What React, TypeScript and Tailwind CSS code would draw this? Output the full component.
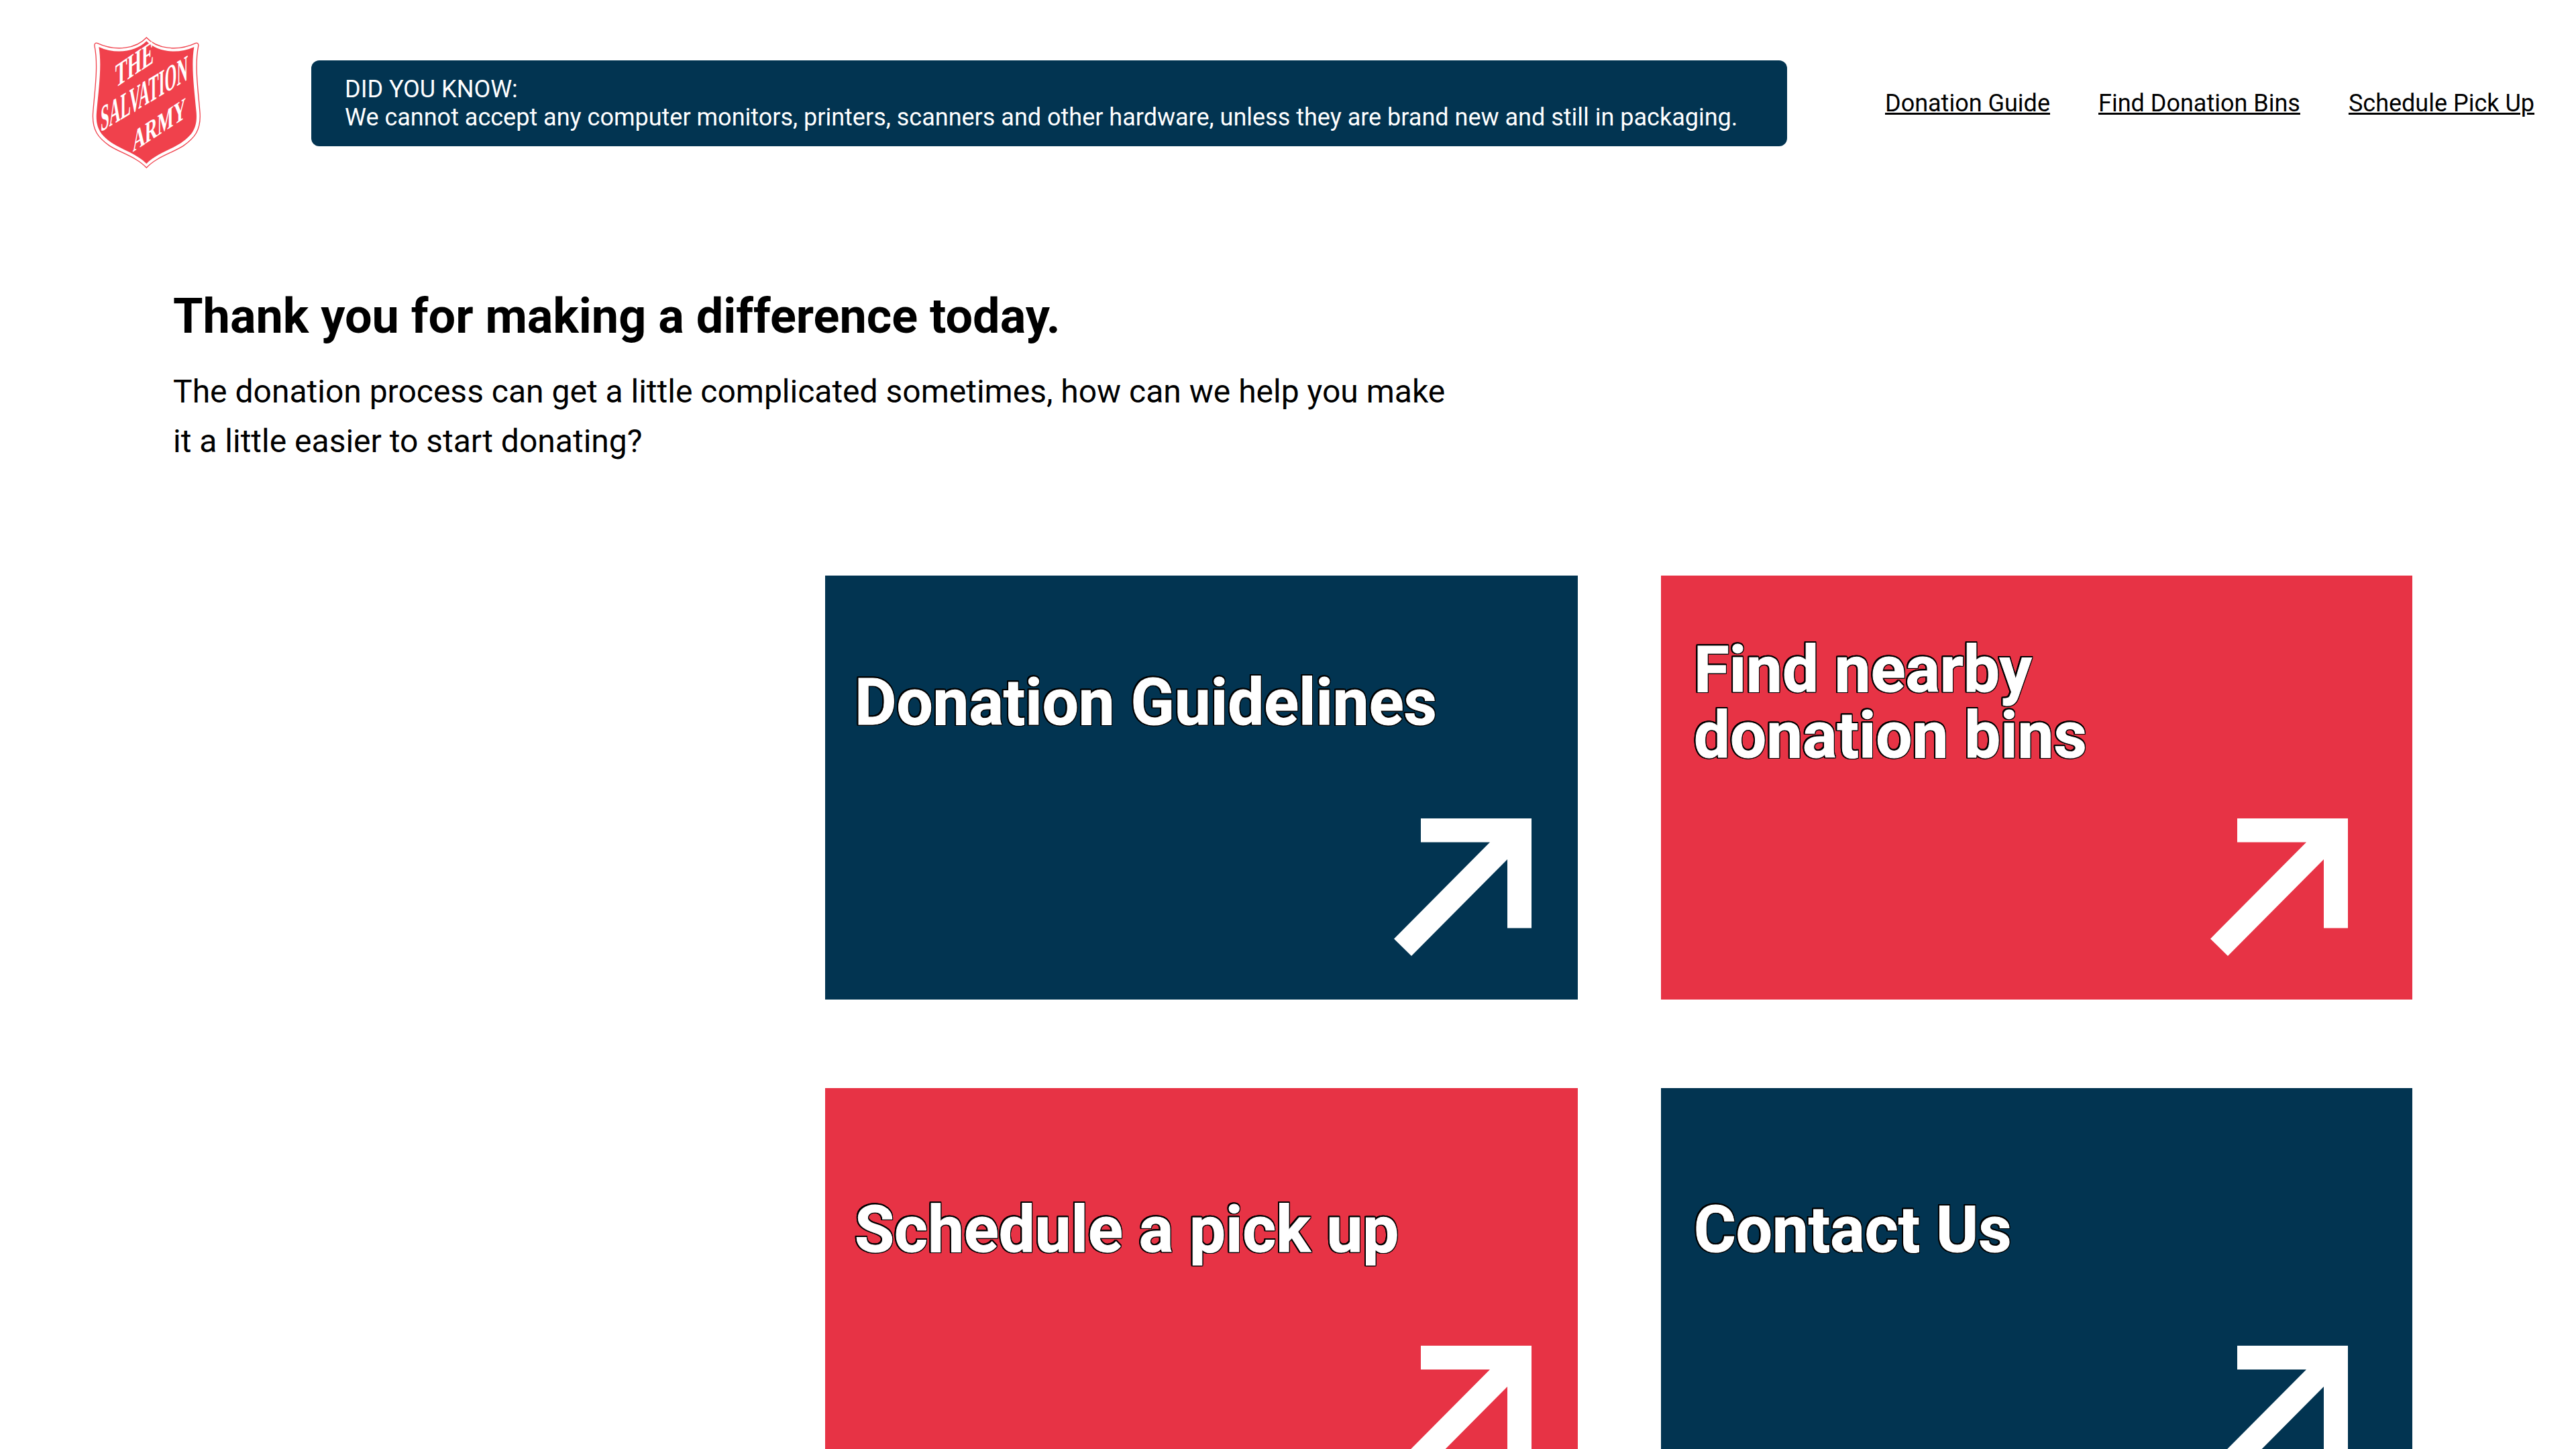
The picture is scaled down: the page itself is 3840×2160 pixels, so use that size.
const NAV_LINKS = ['Donation Guide', 'Find Donation Bins', 'Schedule Pick Up']

const CARDS = [
    { title: ['Donation Guidelines'], card: 'bg-[#023451] pl-[44px] pr-[69px] pt-[91px]' },
    { title: ['Find nearby', 'donation bins'], card: 'bg-[#e73345] pl-[49px] pr-[96px] pt-[91px]' },
    { title: ['Schedule a pick up'], card: 'bg-[#e73345] pl-[44px] pr-[69px] pt-[113px]' },
    { title: ['Contact Us'], card: 'bg-[#023451] pl-[49px] pr-[96px] pt-[113px]' },
]

const Logo = () => (
    <svg viewBox="0 0 525 600" className="w-[175px] h-[200px] shrink-0">
        <path
            d="M265 6 C310 55 400 70 485 31 C493 28 499 34 497 44 C480 130 495 230 504 340 C510 420 480 455 430 490 C380 522 310 540 265 588 C220 540 150 522 100 490 C50 455 20 420 26 340 C35 230 50 130 33 44 C31 34 37 28 45 31 C130 70 220 55 265 6 Z"
            fill="#ffffff"
            stroke="#f0414c"
            strokeWidth="4"
        />
        <path
            d="M265 22 C310 68 400 84 478 48 C464 130 478 230 488 340 C494 412 468 444 420 477 C372 508 305 528 265 570 C225 528 158 508 110 477 C62 444 36 412 42 340 C52 230 66 130 52 48 C130 84 220 68 265 22 Z"
            fill="#f0414c"
        />
        <g fill="#ffffff" fontFamily="'Liberation Serif', serif" fontWeight="700">
            <text transform="translate(125 232) skewY(-34)" fontSize="150" textLength="172" lengthAdjust="spacingAndGlyphs">THE</text>
            <text transform="translate(60 428) skewY(-31)" fontSize="165" textLength="390" lengthAdjust="spacingAndGlyphs">SALVATION</text>
            <text transform="translate(203 518) skewY(-33)" fontSize="135" textLength="238" lengthAdjust="spacingAndGlyphs">ARMY</text>
        </g>
    </svg>
)

const Arrow = () => (
    <svg viewBox="0 0 205 208" className="w-[205px] h-[205px] shrink-0" preserveAspectRatio="none">
        <polygon points="40,0 205,0 205,166 169,166 169,62 26,208 0,182 143,36 40,36" fill="#ffffff" />
    </svg>
)

const App = () => {
    return (
        <div className="h-[2160px] overflow-hidden bg-white text-black font-['Roboto',sans-serif]">
            <header className="flex items-center h-[220px] pt-[88px] pl-[130px]">
                <Logo />
                <div className="ml-[159px] w-[2200px] h-[128px] shrink-0 rounded-[12px] bg-[#023451] text-white text-[36px] leading-[42px] px-[50px] py-[22px]">
                    <p>DID YOU KNOW:</p>
                    <p>We cannot accept any computer monitors, printers, scanners and other hardware, unless they are brand new and still in packaging.</p>
                </div>
                <nav className="flex gap-[72px] ml-[146px] text-[36px] leading-[42px]">
                    {NAV_LINKS.map((label) => (
                        <a key={label} className="underline whitespace-nowrap">
                            {label}
                        </a>
                    ))}
                </nav>
            </header>

            <section className="pl-[258px] pt-[210px]">
                <h1 className="text-[72px] leading-[84px] font-bold">Thank you for making a difference today.</h1>
                <p className="mt-[33px] text-[48px] leading-[74px] w-[1920px]">
                    The donation process can get a little complicated sometimes, how can we help you make it a little easier to start donating?
                </p>
            </section>

            <section className="grid grid-cols-[1122px_1120px] gap-x-[124px] gap-y-[132px] ml-[1230px] mt-[163px]">
                {CARDS.map(({ title, card }) => (
                    <a key={title[0]} className={`flex flex-col h-[632px] ${card}`}>
                        <h2 className="flex flex-col justify-center h-[196px] text-white text-[96px] leading-[98px] font-bold [-webkit-text-stroke:1px_white] [filter:drop-shadow(1.5px_0_0_black)_drop-shadow(-1.5px_0_0_black)_drop-shadow(0_1.5px_0_black)_drop-shadow(0_-1.5px_0_black)]">
                            {title.map((line) => (
                                <span key={line}>{line}</span>
                            ))}
                        </h2>
                        <div className="flex justify-end mt-[75px]">
                            <Arrow />
                        </div>
                    </a>
                ))}
            </section>
        </div>
    )
}

export default App
